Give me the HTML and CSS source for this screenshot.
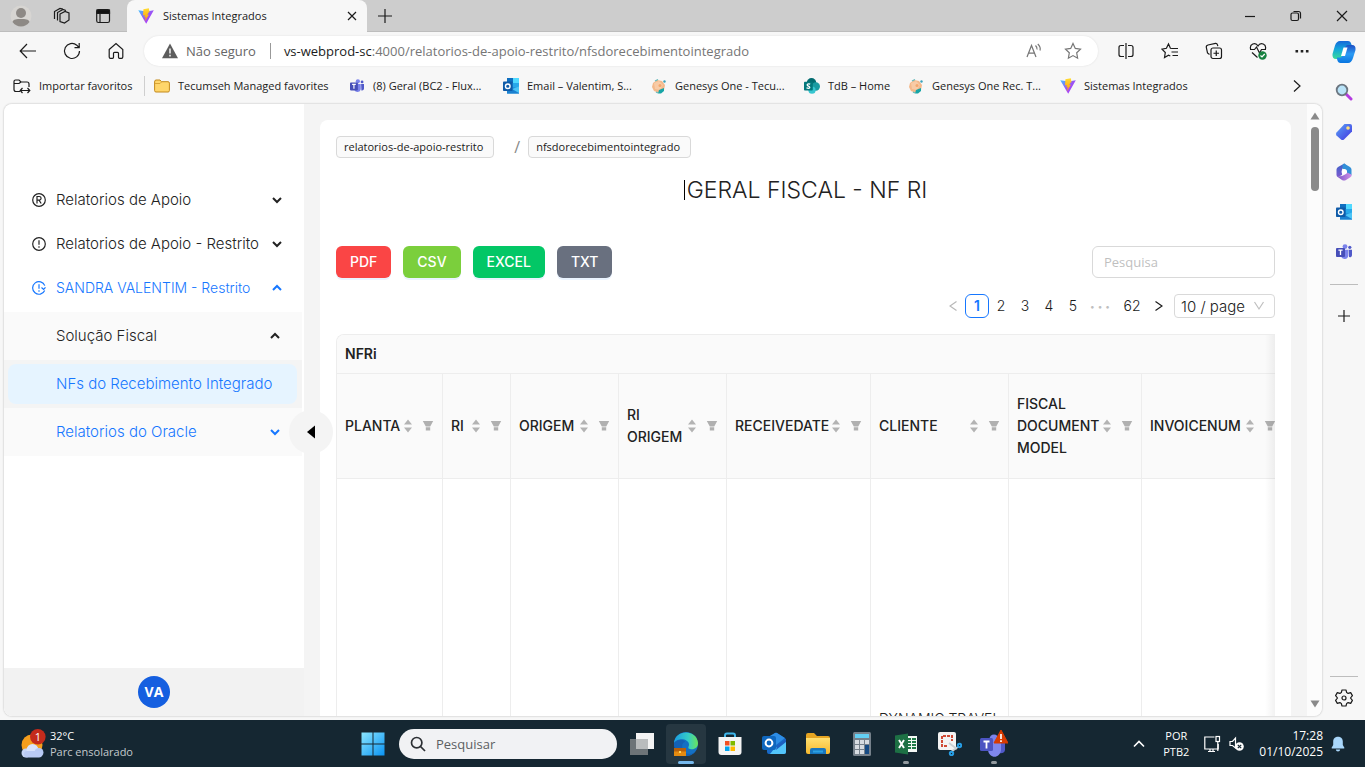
FILE: index.html
```html
<!DOCTYPE html>
<html lang="pt-BR">
<head>
<meta charset="utf-8">
<title>Sistemas Integrados</title>
<link rel="stylesheet" href="styles.css">
</head>
<body>
<svg class="defs" aria-hidden="true">
  <defs>
    <linearGradient id="gv" x1="0" y1="0" x2="1" y2="1"><stop offset="0" stop-color="#41c3ff"/><stop offset=".5" stop-color="#9a52f5"/><stop offset="1" stop-color="#bd34fe"/></linearGradient>
    <linearGradient id="gy" x1="0" y1="0" x2="0" y2="1"><stop offset="0" stop-color="#ffdd35"/><stop offset="1" stop-color="#ff9a00"/></linearGradient>
    <linearGradient id="gtag" x1="0" y1="0" x2="1" y2="1"><stop offset="0" stop-color="#5aa5f7"/><stop offset="1" stop-color="#4433df"/></linearGradient>
    <linearGradient id="gwin" x1="0" y1="0" x2="1" y2="1"><stop offset="0" stop-color="#8be6ff"/><stop offset="1" stop-color="#0a93f2"/></linearGradient>
    <linearGradient id="gedge" x1="0" y1="0" x2="1" y2="0"><stop offset="0" stop-color="#1b9de2"/><stop offset=".6" stop-color="#35cdc5"/><stop offset="1" stop-color="#6be35a"/></linearGradient>
    <linearGradient id="gcop1" x1="0" y1="0" x2="0" y2="1"><stop offset="0" stop-color="#1668d8"/><stop offset=".45" stop-color="#12a6dc"/><stop offset="1" stop-color="#3ddc97"/></linearGradient>
    <linearGradient id="gcop2" x1="0" y1="0" x2="0" y2="1"><stop offset="0" stop-color="#1d4fc4"/><stop offset=".5" stop-color="#2b9bf4"/><stop offset="1" stop-color="#0875e0"/></linearGradient>
    <linearGradient id="gm1" x1="0" y1="0" x2="0" y2="1"><stop offset="0" stop-color="#3a63c8"/><stop offset="1" stop-color="#7d5bd0"/></linearGradient>
    <linearGradient id="gm2" x1="0" y1="0" x2="1" y2="0"><stop offset="0" stop-color="#7b57c9"/><stop offset="1" stop-color="#cf8fe6"/></linearGradient>
    <linearGradient id="gfold" x1="0" y1="0" x2="0" y2="1"><stop offset="0" stop-color="#ffdf70"/><stop offset="1" stop-color="#f7b92e"/></linearGradient>
  </defs>
  <symbol id="vite" viewBox="0 0 16 16"><path d="M.3 2.2 8.2 15.8 15.8 2.2 8.5 3.5Z" fill="url(#gv)"/><path d="M10.8.2 5.4 1.3 5 7.4l1.8-.4-.5 2.5 1.5-.4-1 4.3L11 6.6l-1.8.4 1.6-2.7.8-.1Z" fill="url(#gy)"/></symbol>
  <symbol id="teams" viewBox="0 0 16 16"><circle cx="9" cy="2.6" r="2.4" fill="#7b83eb"/><circle cx="13.8" cy="3.3" r="1.6" fill="#5059c9"/><path d="M5 5.7h7.3v6A3.8 3.8 0 0 1 5 12.500Z" fill="#7b83eb"/><path d="M12.700 5.700H16v5.200c0 1.700-1.500 2.600-3 2.200Z" fill="#5059c9"/><rect y="4" width="9" height="9" rx=".9" fill="#464eb8"/><path d="M2.400 6.200h4.200M4.500 6.200v4.900" stroke="#fff" stroke-width="1.300"/></symbol>
  <symbol id="outlook" viewBox="0 0 16 16"><path d="M4 0h12v15.500H4Z" fill="#1490df"/><path d="M4 0h6v5H4Z" fill="#0f6fc0"/><path d="M10 0h6v5h-6Z" fill="#50d9ff"/><path d="M10 5h6v5h-6Z" fill="#28a8ea"/><path d="m4 9 12 1v5.500H4Z" fill="#1a80d0"/><path d="M16 8.500V15L9 11Z" fill="#4ac4f6"/><rect y="3.500" width="9.500" height="9.500" rx=".8" fill="#0f5ba8"/><circle cx="4.750" cy="8.250" r="2.300" fill="none" stroke="#fff" stroke-width="1.400"/></symbol>
  <symbol id="genesys" viewBox="0 0 16 16"><path d="m2 5 4-3 5 1 3 4-1 5-5 3-5-2-2-4Z" fill="#f4b98b"/><path d="m3 5 5-2 4 4-3 5-5-1Z" fill="#f8cba6"/><path d="M8 12l5-2v3l-3 2.500H7Z" fill="#17a5a6"/><path d="m4 3 3-1.500M5 14l2 1" stroke="#63b9ba" stroke-width="1.200" fill="none"/><circle cx="13.500" cy="3.500" r="1.200" fill="#3aa2bc"/><circle cx="9" cy="7.500" r="1.500" fill="#f3a86f"/></symbol>
  <symbol id="sharepoint" viewBox="0 0 16 16"><circle cx="7.500" cy="4.800" r="4.800" fill="#036c70"/><circle cx="11.800" cy="8.500" r="4.200" fill="#1a9ba1"/><circle cx="8" cy="12.200" r="3.600" fill="#37c6d0"/><rect y="3.800" width="8.800" height="8.800" rx=".8" fill="#03787c"/><path d="M6.200 6.200C3.500 5 2 7.200 4.400 8.200s1.500 2.900-1.900 1.700" fill="none" stroke="#fff" stroke-width="1.300"/></symbol>
  <symbol id="updown" viewBox="0 0 10 14"><path d="M5 .5 9 5.500H1ZM5 13.500 9 8.500H1Z" fill="#b3b3b3"/></symbol>
  <symbol id="filter" viewBox="0 0 12 12"><path d="M.8 1h10.400L8.200 6.400H3.800ZM3.800 7.200h4.400V10.500H3.800Z" fill="#b0b0b0"/></symbol>
  <symbol id="down" viewBox="0 0 12 12"><path d="m2 4 4 4 4-4" fill="none" stroke="currentColor" stroke-width="2"/></symbol>
  <symbol id="up" viewBox="0 0 12 12"><path d="m2 8 4-4 4 4" fill="none" stroke="currentColor" stroke-width="2"/></symbol>
</svg>

<header class="titlebar">
  <div class="title-tools">
    <button class="tt" aria-label="Perfil"><svg width="22" height="22" viewBox="0 0 22 22"><circle cx="11" cy="11" r="10.500" fill="#d7d5d2"/><circle cx="11" cy="8" r="5" fill="#8d8985"/><path d="M2.500 17c1-3 4-3 8.500-3s7.500 0 8.500 3A11 11 0 0 1 11 21.500 11 11 0 0 1 2.500 17Z" fill="#8d8985"/></svg></button>
    <button class="tt" aria-label="Espaços de trabalho"><svg class="ln" width="18" height="18" viewBox="0 0 18 18"><path d="m7 7 5-2.500 4 1.500v7l-4.500 3L7 14.500ZM7 7v7.500M4.500 13.500V5.500L10 2.500l3 1M1.500 12V4.500L7 1.500l3 .5"/></svg></button>
    <button class="tt" aria-label="Ações de guia"><svg class="ln" width="16" height="16" viewBox="0 0 16 16"><rect x="1.700" y="1.700" width="12.800" height="12.800" rx="1.800"/><path d="M2 2h12.500v3.300H2Z" fill="#111"/><path d="M5 5v9.500"/></svg></button>
  </div>
  <div class="tab"><svg width="16" height="16"><use href="#vite"/></svg><span>Sistemas Integrados</span><button aria-label="Fechar guia"><svg class="ln" width="10" height="10" viewBox="0 0 10 10"><path d="m1 1 8 8M9 1 1 9"/></svg></button></div>
  <button class="newtab" aria-label="Nova guia"><svg class="ln" width="14" height="14" viewBox="0 0 14 14"><path d="M7 0v14M0 7h14"/></svg></button>
  <div class="wins">
    <button aria-label="Minimizar"><svg class="ln" width="12" height="12" viewBox="0 0 12 12"><path d="M1 6.500h10"/></svg></button>
    <button aria-label="Restaurar"><svg class="ln" width="12" height="12" viewBox="0 0 12 12"><rect x="1" y="3" width="7.500" height="7.500" rx="1.500"/><path d="M3.500 1.500h5a2 2 0 0 1 2 2v5"/></svg></button>
    <button aria-label="Fechar"><svg class="ln" width="12" height="12" viewBox="0 0 12 12"><path d="m1 1 10 10M11 1 1 11"/></svg></button>
  </div>
</header>

<div class="browser">
  <div class="browser-main">
    <nav class="toolbar">
      <button class="tb" aria-label="Voltar"><svg class="ln" width="18" height="16" viewBox="0 0 18 16"><path d="M17 8H1.500M8 1 1.200 8 8 15"/></svg></button>
      <button class="tb" aria-label="Atualizar"><svg class="ln" width="18" height="18" viewBox="0 0 18 18"><path d="M16.500 9A7.500 7.500 0 1 1 13.800 3.200L16 5.500M16.200 1v4.700h-4.700"/></svg></button>
      <button class="tb" aria-label="Início"><svg class="ln" width="16" height="18" viewBox="0 0 16 18"><path d="M1.200 7.500 8 1.500l6.800 6V15q0 1.300-1.300 1.300h-2q-1 0-1-1v-4q0-1-1-1h-3q-1 0-1 1v4q0 1-1 1h-2Q1.200 16.300 1.200 15Z"/></svg></button>
      <div class="address">
        <svg width="16" height="16" viewBox="0 0 16 16"><path d="M8 .5 16 15.300H0Z" fill="#5d5d5d"/><path d="M8 5.500v5M8 11.800v1.600" stroke="#fff" stroke-width="1.400"/></svg>
        <span class="unsafe">Não seguro</span><span class="vbar"></span>
        <span class="url"><b>vs-webprod-sc</b>:4000/relatorios-de-apoio-restrito/nfsdorecebimentointegrado</span>
        <button aria-label="Ler em voz alta"><svg class="ln gray" width="16" height="16" viewBox="0 0 16 16"><path d="m1 14 4.500-11.500L10 14M2.500 10.200h6M9.500 2.500q2 2 1.500 4M11.800 1q3.200 3 2.200 6.500"/></svg></button>
        <button aria-label="Favoritar"><svg class="ln gray" width="18" height="18" viewBox="0 0 18 18"><path d="m9 1.500 2.300 4.900 5.200.7-3.800 3.700.9 5.400L9 13.600l-4.600 2.600.9-5.400L1.500 7.100l5.200-.7Z"/></svg></button>
      </div>
      <div class="actions">
        <button class="tb" aria-label="Tela dividida"><svg class="ln" width="16" height="16" viewBox="0 0 16 16"><path d="M6 2.500H3Q1 2.500 1 4.500v7q0 2 2 2h3M10 2.500h3q2 0 2 2v7q0 2-2 2h-3M8 0v16"/></svg></button>
        <button class="tb" aria-label="Favoritos"><svg class="ln" width="18" height="18" viewBox="0 0 18 18"><path d="M11 6.500 9.400 6.300 7.500 2 5.400 6.300l-4.400.8 3.300 3.400-.8 5 4-2.300 1.800.8M11 6.500h6M10.500 10H17M11.500 13.500H17"/></svg></button>
        <button class="tb" aria-label="Coleções"><svg class="ln" width="18" height="18" viewBox="0 0 18 18"><rect x="6" y="6" width="10.500" height="10.500" rx="2"/><path d="M11.250 8.500v5.500M8.500 11.250H14M4.500 12.500 2.500 11 1.300 5.500Q1 3.500 3 3l7.500-1.600q1.500-.2 2 1.500l.3 1.300"/></svg></button>
        <button class="tb" aria-label="Desempenho"><svg class="ln" width="18" height="18" viewBox="0 0 18 18"><path d="M1.700 7.500C0 2 6.500-.5 9 4c2.500-4.500 9-2 7.300 3.500M1 7.500h4.500L7.500 5l3 6 2-3.500H17M3 10.500 8.500 15.500"/><circle cx="13.500" cy="13.500" r="4.200" fill="#178240" stroke="none"/><path d="m11.500 13.500 1.500 1.500 2.700-3" stroke="#fff"/></svg></button>
        <button class="tb" aria-label="Mais"><svg width="14" height="4" viewBox="0 0 14 4"><path d="M.5 1h2.600v2.400H.5ZM5.700 1h2.600v2.400H5.700ZM10.900 1h2.600v2.400h-2.600Z" fill="#222"/></svg></button>
      </div>
    </nav>
    <nav class="favorites">
      <a href="#"><svg class="ln" width="18" height="16" viewBox="0 0 18 16"><path d="M7 13.500H3q-2 0-2-2V3.500Q1 2 2.500 2H6l2 2h6q2 0 2 2v3M1 5.500h5L8 4M7.500 12.500h9M9.500 10l-2.300 2.500L9.500 15M14.500 10l2.300 2.500-2.300 2.500"/></svg><span>Importar favoritos</span></a>
      <a href="#" class="sep"><svg width="16" height="16" viewBox="0 0 16 16"><path d="M.6 4Q.6 2 2 2h4l1.500 1.700H14q1.400 0 1.400 1.400v7.500q0 1.400-1.400 1.400H2q-1.400 0-1.400-1.400Z" fill="#ffd66b" stroke="#c38a1c"/><path d="M1 5.500h5l1.500-1.500" fill="none" stroke="#d9a435"/></svg><span>Tecumseh Managed favorites</span></a>
      <a href="#"><svg width="16" height="14"><use href="#teams"/></svg><span>(8) Geral (BC2 - Flux...</span></a>
      <a href="#"><svg width="16" height="16"><use href="#outlook"/></svg><span>Email – Valentim, S...</span></a>
      <a href="#"><svg width="16" height="16"><use href="#genesys"/></svg><span>Genesys One - Tecu...</span></a>
      <a href="#"><svg width="16" height="16"><use href="#sharepoint"/></svg><span>TdB – Home</span></a>
      <a href="#"><svg width="16" height="16"><use href="#genesys"/></svg><span>Genesys One Rec. T...</span></a>
      <a href="#"><svg width="16" height="16"><use href="#vite"/></svg><span>Sistemas Integrados</span></a>
      <button aria-label="Mais favoritos"><svg class="ln" width="8" height="12" viewBox="0 0 8 12"><path d="m1 .5 6 5.500-6 5.500"/></svg></button>
    </nav>

    <div class="page">
      <aside class="menu">
        <ul class="menu-list">
          <li class="item"><svg class="ln" width="14" height="14" viewBox="0 0 14 14"><circle cx="7" cy="7" r="6.300"/><path d="M5 10.500v-7h2.200q1.900 0 1.900 1.800T7.200 7.200H5m2 0 2.200 3.300"/></svg><a href="#">Relatorios de Apoio</a><svg class="arrow" width="12" height="12"><use href="#down"/></svg></li>
          <li class="item"><svg class="ln" width="14" height="14" viewBox="0 0 14 14"><circle cx="7" cy="7" r="6.300"/><path d="M7 3.200v4.500M7 9.300v1.500"/></svg><a href="#">Relatorios de Apoio - Restrito</a><svg class="arrow" width="12" height="12"><use href="#down"/></svg></li>
          <li class="item caps blue"><svg class="ln" width="14" height="14" viewBox="0 0 14 14"><path d="M12.700 9.500A6.300 6.300 0 1 1 12.800 4.600M7 3.200v4.500M7 9.300v1.500M9.500 6.500l2.100 2 1.900-2.200"/></svg><a href="#">SANDRA VALENTIM - Restrito</a><svg class="arrow" width="12" height="12"><use href="#up"/></svg></li>
        </ul>
        <ul class="submenu">
          <li class="sub"><a href="#">Solução Fiscal</a><svg width="12" height="12"><use href="#up"/></svg></li>
          <li class="nested"><a href="#">NFs do Recebimento Integrado</a></li>
          <li class="sub blue"><a href="#">Relatorios do Oracle</a><svg width="12" height="12"><use href="#down"/></svg></li>
        </ul>
        <div class="user"><span class="avatar">VA</span></div>
        <button class="collapse" aria-label="Recolher menu"><svg width="8" height="14" viewBox="0 0 8 14"><path d="M8 .5v13L0 7Z" fill="#000"/></svg></button>
      </aside>

      <main class="content">
        <section class="card">
          <div class="crumbs"><a class="tag" href="#">relatorios-de-apoio-restrito</a><span class="slash">/</span><a class="tag" href="#">nfsdorecebimentointegrado</a></div>
          <h1><span>GERAL FISCAL - NF RI</span></h1>
          <div class="exports">
            <button class="red">PDF</button><button class="lime">CSV</button><button class="green">EXCEL</button><button class="slate">TXT</button>
            <input type="search" aria-label="Pesquisa" placeholder="Pesquisa">
          </div>
          <nav class="pager">
            <button aria-label="Página anterior" disabled><svg class="ln" width="8" height="12" viewBox="0 0 8 12"><path d="M7.500 1.500 1 6l6.500 4.500"/></svg></button>
            <button class="current">1</button><button>2</button><button>3</button><button>4</button><button>5</button>
            <span class="dots">•••</span><button class="wide">62</button>
            <button aria-label="Próxima página"><svg class="ln" width="8" height="12" viewBox="0 0 8 12"><path d="M.5 1.500 7 6 .5 10.500"/></svg></button>
            <span class="size"><select aria-label="Itens por página"><option>10 / page</option></select><svg class="ln" width="12" height="10" viewBox="0 0 12 10"><path d="m1.500 1 4.500 7 4.500-7"/></svg></span>
          </nav>
          <div class="grid">
            <div class="grid-title">NFRi</div>
            <table>
              <colgroup><col class="w106"><col class="w68"><col class="w108"><col class="w108"><col class="w144"><col class="w138"><col class="w133"><col class="w143"></colgroup>
              <thead><tr>
                <th><div class="th"><span>PLANTA</span><svg width="10" height="14"><use href="#updown"/></svg><svg width="12" height="12"><use href="#filter"/></svg></div></th>
                <th><div class="th"><span>RI</span><svg width="10" height="14"><use href="#updown"/></svg><svg width="12" height="12"><use href="#filter"/></svg></div></th>
                <th><div class="th"><span>ORIGEM</span><svg width="10" height="14"><use href="#updown"/></svg><svg width="12" height="12"><use href="#filter"/></svg></div></th>
                <th><div class="th"><span>RI<br>ORIGEM</span><svg width="10" height="14"><use href="#updown"/></svg><svg width="12" height="12"><use href="#filter"/></svg></div></th>
                <th><div class="th"><span>RECEIVEDATE</span><svg width="10" height="14"><use href="#updown"/></svg><svg width="12" height="12"><use href="#filter"/></svg></div></th>
                <th><div class="th"><span>CLIENTE</span><svg width="10" height="14"><use href="#updown"/></svg><svg width="12" height="12"><use href="#filter"/></svg></div></th>
                <th><div class="th"><span>FISCAL<br>DOCUMENT<br>MODEL</span><svg width="10" height="14"><use href="#updown"/></svg><svg width="12" height="12"><use href="#filter"/></svg></div></th>
                <th><div class="th"><span>INVOICENUM</span><svg width="10" height="14"><use href="#updown"/></svg><svg width="12" height="12"><use href="#filter"/></svg></div></th>
              </tr></thead>
              <tbody><tr><td></td><td></td><td></td><td></td><td></td><td>DYNAMIC TRAVEL</td><td></td><td></td></tr></tbody>
            </table>
          </div>
        </section>
      </main>
      <div class="scroll"><svg width="10" height="8" viewBox="0 0 10 8"><path d="M5 .5 9.500 7.500H.5Z" fill="#8a8a8a"/></svg><span class="thumb"></span><svg width="10" height="8" viewBox="0 0 10 8"><path d="M5 7.500 9.500.5H.5Z" fill="#8a8a8a"/></svg></div>
    </div>
  </div>

  <aside class="edgebar">
    <button aria-label="Copilot"><svg width="24" height="24" viewBox="0 0 24 24"><path d="M8 1h8q2.500 0 3.300 3l1 3h-4.500q-2 0-2.700 2.500l-2 7Q10.500 19 8 19H4Q0 19 .5 14L3 5.500Q4.500 1 8 1Z" fill="url(#gcop1)"/><path d="M16 23H8.500q-2.500 0-3.200-3l-.6-2.500H8q2 0 2.700-2.500l2.300-7Q13.700 5 16 5h4q4 0 3.500 5L21 18q-1.500 5-5 5Z" fill="url(#gcop2)"/><path d="M11.500 7.500h4L13 16H9Z" fill="#fff"/></svg></button>
    <button aria-label="Pesquisar"><svg width="18" height="18" viewBox="0 0 18 18"><path d="m11 11 5 5" stroke="#b43be0" stroke-width="3" stroke-linecap="round"/><circle cx="7" cy="7" r="5.300" fill="#b9e3f8" stroke="#6c7680" stroke-width="1.800"/></svg></button>
    <button aria-label="Compras"><svg width="18" height="18" viewBox="0 0 18 18"><path d="M9.500 1H15q2 0 2 2v5.500L9 16.500q-1.500 1.200-3 0l-4.500-4q-1.200-1.500 0-3Z" fill="url(#gtag)"/><circle cx="13" cy="5" r="1.800" fill="#ffe07a"/></svg></button>
    <button aria-label="Microsoft 365"><svg width="18" height="18" viewBox="0 0 18 18"><path d="M9.500.5 3 4Q1.500 5 1.500 6.500V12q0 1.500 1.500 2l4-2V7q0-1.500 1.500-2.300L12 3Z" fill="url(#gm1)"/><path d="m9 .5 6 3.500q1.500 1 1.500 2.500v6L12 10V8L7.500 5.500V2Z" fill="#3290d8"/><path d="m2 13.500 5 3.500q2 1 4 0l4-2.500q2-1 1.500-3L12 9.500 9 12l-2 1Z" fill="url(#gm2)"/><circle cx="9.300" cy="8.800" r="2.700" fill="#fff"/></svg></button>
    <button aria-label="Outlook"><svg width="16" height="16"><use href="#outlook"/></svg></button>
    <button aria-label="Teams"><svg width="16" height="16"><use href="#teams"/></svg></button>
    <hr>
    <button class="add" aria-label="Adicionar"><svg class="ln" width="12" height="12" viewBox="0 0 12 12"><path d="M6 0v12M0 6h12"/></svg></button>
    <hr class="push">
    <button class="gear" aria-label="Configurações"><svg class="ln" width="18" height="18" viewBox="0 0 18 18"><circle cx="9" cy="9" r="2"/><path d="M7 1h4l.7 2.600 1.400.8 2.600-.8 1.700 3L15.500 9l1.900 2.400-1.700 3-2.600-.8-1.400.8L11 17H7l-.7-2.600-1.400-.8-2.600.8-1.700-3L2.500 9 .6 6.600l1.700-3 2.600.8 1.400-.8Z" stroke-linejoin="round"/></svg></button>
  </aside>
</div>

<footer class="taskbar">
  <div class="weather">
    <svg width="26" height="30" viewBox="0 0 26 30"><circle cx="12" cy="16" r="10.500" fill="#f59e1d"/><circle cx="6" cy="24" r="4.500" fill="#c6d6f8"/><circle cx="12.500" cy="21" r="6" fill="#d8e3fc"/><circle cx="19" cy="23.500" r="4.500" fill="#b6c9f4"/><rect x="4" y="22" width="18" height="6.500" rx="3" fill="#b9cbf5"/><circle cx="17.800" cy="7.800" r="7.800" fill="#c42b1c"/><text x="18" y="12" class="badge">1</text></svg>
    <p>32°C<br><span>Parc ensolarado</span></p>
  </div>
  <div class="apps">
    <button class="app" aria-label="Iniciar"><svg width="24" height="24" viewBox="0 0 24 24"><path d="M.5.500h11v11H.5ZM12.500.500h11v11h-11ZM.5 12.500h11v11H.5ZM12.500 12.500h11v11h-11Z" fill="url(#gwin)"/></svg></button>
    <label class="search"><svg width="16" height="16" viewBox="0 0 16 16"><circle cx="6.700" cy="6.700" r="5.200" fill="none" stroke="#2c3034" stroke-width="1.700"/><path d="m10.500 10.500 4.500 4.500" stroke="#2c3034" stroke-width="1.700"/></svg><input type="text" placeholder="Pesquisar" aria-label="Pesquisar"></label>
    <button class="app" aria-label="Visão de tarefas"><svg width="24" height="24" viewBox="0 0 24 24"><path d="M6 1h18v16H6Z" fill="#f3f3f3"/><path d="M0 7h18v16H0Z" fill="#777d80" opacity=".9"/><path d="M6 7h12v10H6Z" fill="#b9bcbd"/></svg></button>
    <button class="app active" aria-label="Edge"><svg width="26" height="26" viewBox="0 0 26 26"><circle cx="13" cy="13" r="12" fill="#1470c4"/><path d="M1 12C2-2 24-2 25 12c0 5-4 7-8 6-3-.7-1-2-1-4.500C16 8 5 6 1 12Z" fill="url(#gedge)"/><path d="M1 12c5-5 11-3 11-1-4 1-4 8 1 11 3 1.800 7 1 10-2-7 9-22 6-22-8Z" fill="#1361b5"/><path d="M1 17h12v8H1Z" fill="#e58b10"/><path d="M1 17h12v3.500H1Z" fill="#b7600a"/><path d="M6 20h2v2H6Z" fill="#ffd65e"/></svg></button>
    <button class="app" aria-label="Store"><svg width="24" height="24" viewBox="0 0 24 24"><path d="M7 7V3.500Q7 1.500 9 1.500h6q2 0 2 2V7" fill="none" stroke="#3fb6ea" stroke-width="2"/><path d="M.5 5h23v15q0 3-3 3h-17q-3 0-3-3Z" fill="#f4f4f4"/><path d="M7 9h4.500v4.500H7Z" fill="#f25022"/><path d="M12.500 9H17v4.500h-4.500Z" fill="#7fba00"/><path d="M7 14.500h4.500V19H7Z" fill="#00a4ef"/><path d="M12.500 14.500H17V19h-4.500Z" fill="#ffb900"/></svg></button>
    <button class="app" aria-label="Outlook"><svg width="24" height="24" viewBox="0 0 24 24"><path d="m5 7 8-6q1-.7 2 0l9 6v13q0 2-2 2H7q-2 0-2-2Z" fill="#1769c8"/><path d="m6 5 7-4q1-.5 2 0l8 5-9 7Z" fill="#2d8de5"/><path d="M24 9v11q0 2-2 2H8l4-5Z" fill="#53c5fa"/><path d="m24 7-9 7-1 4 10-8Z" fill="#1d5fc0"/><rect y="4" width="14" height="14" rx="2" fill="#0f67be"/><circle cx="7" cy="11" r="3.400" fill="none" stroke="#fff" stroke-width="2"/></svg></button>
    <button class="app" aria-label="Arquivos"><svg width="26" height="24" viewBox="0 0 26 24"><path d="M1 3q0-2 2-2h6l3 3h11q2 0 2 2v3H1Z" fill="#e5a422"/><path d="M1 6h24v14q0 2-2 2H3q-2 0-2-2Z" fill="url(#gfold)"/><path d="M5 22v-4q0-2 2-2h12q2 0 2 2v4Z" fill="#1976bd"/><path d="M8 19.500h10" stroke="#2ba2e4" stroke-width="2"/></svg></button>
    <button class="app" aria-label="Calculadora"><svg width="18" height="24" viewBox="0 0 18 24"><rect width="18" height="24" rx="1.500" fill="#76818b"/><path d="M2 2h14v4H2Z" fill="#63d0f4"/><path d="M2 8h4v4H2ZM7 8h4v4H7ZM12 8h4v4h-4ZM2 13h4v4H2ZM7 13h4v4H7ZM2 18h4v4H2ZM7 18h4v4H7Z" fill="#d7dce1"/><path d="M12 13h4v9h-4Z" fill="#164b84"/></svg></button>
    <button class="app run" aria-label="Excel"><svg width="22" height="22" viewBox="0 0 22 22"><path d="M12 3h10v16H12Z" fill="#f4f8f5"/><path d="M13 5h3v2h-3ZM17 5h4v2h-4ZM13 8h3v2h-3ZM17 8h4v2h-4ZM13 11h3v2h-3ZM17 11h4v2h-4ZM13 14h3v2h-3ZM17 14h4v2h-4Z" fill="#1f7a47"/><path d="m0 2.500 13-2v21l-13-2Z" fill="#1d7044"/><path d="m4 7 5 8M9 7l-5 8" stroke="#fff" stroke-width="1.900"/></svg></button>
    <button class="app" aria-label="Ferramenta de captura"><svg width="24" height="24" viewBox="0 0 24 24"><rect width="18" height="18" rx="2" fill="#f3f3f3"/><path d="M9 14H4V4h10v5" fill="none" stroke="#d04a35" stroke-width="2" stroke-dasharray="3 1"/><path d="m11 11 8 6M21 14l-8 6" stroke="#c9ced2" stroke-width="1.800"/><g fill="none" stroke="#269ee5" stroke-width="2"><circle cx="21.500" cy="13.500" r="1.700"/><circle cx="13.500" cy="21.500" r="1.700"/></g></svg></button>
    <button class="app run" aria-label="Teams"><svg width="28" height="28" viewBox="0 0 28 28"><circle cx="14" cy="9" r="4.500" fill="#7b83eb"/><path d="M19 11h6v9q-1 4-6 3Z" fill="#5059c9"/><path d="M8 12h13v8c-1 9-12 9-13 0Z" fill="#7f87ee"/><rect y="8" width="13" height="13" rx="1.500" fill="#4c54c2"/><path d="M3.500 11.500h6M6.500 11.500v7" stroke="#fff" stroke-width="1.800"/><path d="M21 0 28 13H14Z" fill="#d83b01" stroke="#d83b01" stroke-linejoin="round"/><path d="M21 4v5M21 10.300v1.700" stroke="#fff" stroke-width="1.700"/></svg></button>
  </div>
  <div class="tray">
    <button aria-label="Ícones ocultos"><svg class="ln" width="12" height="8" viewBox="0 0 12 8"><path d="m1 6.500 5-5 5 5" stroke-width="1.600"/></svg></button>
    <p class="lang">POR<br>PTB2</p>
    <svg class="ln" width="18" height="18" viewBox="0 0 18 18"><path d="M11.500 2H1.800v12h13.400V9M5 16.500h7M7 14v2.500M10 14v2.500"/><rect x="13" y="1.500" width="3.500" height="5"/><path d="M14.800 6.500V16"/></svg>
    <svg class="ln vol" width="16" height="16" viewBox="0 0 16 16"><path d="M6.500 2v10L3.500 9.500H1v-4h2.500Z"/><circle cx="10.500" cy="10.500" r="4.300" fill="#fff" stroke="none"/><path d="m8.800 8.800 3.400 3.400M12.200 8.800l-3.400 3.400" stroke="#152732"/></svg>
    <p class="clock">17:28<br>01/10/2025</p>
    <svg width="14" height="16" viewBox="0 0 14 16"><path d="M7 .8c-3.300 0-4.800 2.200-4.800 4.700v3.500L.6 11.700q-.3.800.6.800h11.600q.9 0 .6-.8L11.800 9V5.500C11.800 3 10.300.8 7 .8ZM4.800 13.500h4.400Q9 15.400 7 15.400t-2.200-1.900Z" fill="#a9d7fb"/></svg>
  </div>
</footer>
</body>
</html>
```
FILE: styles.css
```css
* { box-sizing: border-box; }
body { margin: 0; height: 100vh; display: flex; flex-direction: column; background: #f7f7f7; font: 12px/16px "Open Sans", "Noto Sans", sans-serif; color: #1b1b1b; overflow: hidden; }
button { border: 0; padding: 0; background: none; font: inherit; color: inherit; display: flex; align-items: center; justify-content: center; }
a { color: inherit; text-decoration: none; }
p, ul, h1 { margin: 0; padding: 0; }
svg { display: block; flex: none; }
.defs { position: absolute; width: 0; height: 0; }
.ln { fill: none; stroke: currentColor; stroke-width: 1.2; }

/* Title bar */
.titlebar { flex: none; height: 32px; display: flex; background: #cdcdcd; border-bottom: 1px solid #bdbdbd; }
.title-tools { display: flex; width: 127px; }
.tt { width: 41px; }
.tab { width: 240px; height: 32px; display: flex; align-items: center; gap: 9px; padding: 0 10px 0 11px; background: #f7f7f7; border-radius: 8px 8px 0 0; }
.tab span { flex: 1; font-size: 11px; }
.newtab { width: 35px; }
.wins { margin-left: auto; display: flex; }
.wins button { width: 46px; }

/* Browser chrome */
.browser { flex: 1; min-height: 0; display: flex; }
.browser-main { flex: 1; min-width: 0; display: flex; flex-direction: column; }
.toolbar { flex: none; height: 38px; display: flex; align-items: center; padding-left: 6px; }
.tb { width: 44px; height: 30px; }
.address { flex: 1; height: 30px; margin: 0 6px; padding: 0 16px 0 18px; display: flex; align-items: center; background: #fff; border-radius: 15px; font-size: 13px; color: #767676; box-shadow: 0 0 2px #ddd; }
.unsafe { margin-left: 8px; color: #666; }
.vbar { width: 1px; height: 16px; margin: 0 13px 0 14px; background: #999; }
.url { flex: 1; }
.url b { font-weight: 400; color: #1b1b1b; }
.address button { margin-left: 22px; }
.gray { color: #767676; }
.actions { display: flex; }
.favorites { flex: none; height: 33px; padding: 0 0 2px 13px; display: grid; grid-template-columns: 141px 195px 154px 148px 153px 104px 152px 1fr 54px; align-items: center; font-size: 11px; }
.favorites a { display: flex; align-items: center; gap: 8px; height: 20px; white-space: nowrap; }
.favorites .sep { margin-left: -10px; padding-left: 9px; border-left: 1px solid #cfcfcf; }

/* Side bar of the browser */
.edgebar { flex: none; width: 41px; display: flex; flex-direction: column; align-items: center; padding: 0 2px 4px 0; }
.edgebar button { width: 39px; height: 40px; }
.edgebar hr { width: 28px; height: 1px; margin: 12px 0 11px; border: 0; background: #bdbdbd; }
.edgebar hr.push { margin: auto 0 3px; }
.edgebar .gear { height: 36px; }

/* Page frame */
.page { flex: 1; min-height: 0; margin: 1px 2px 4px 4px; display: flex; overflow: hidden; border-radius: 8px; background: #f4f4f4; box-shadow: 0 0 2px #aaa; font-family: Inter, sans-serif; font-size: 14px; line-height: 22px; }
.menu { position: relative; flex: none; width: 300px; display: flex; flex-direction: column; background: #fff; color: #222; font-size: 15px; font-weight: 300; }
.menu-list { padding: 76px 21px 0 28px; list-style: none; }
.item { height: 40px; margin-bottom: 4px; display: flex; align-items: center; gap: 10px; }
.item a, .sub a { flex: 1; white-space: nowrap; }
.caps { font-size: 14px; }
.blue { color: #1677ff; }
.submenu { list-style: none; background: #fafafa; width: 298px; }
.sub { height: 48px; display: flex; align-items: center; padding: 0 21px 0 52px; }
.nested { height: 48px; padding: 4px 5px 4px 4px; background: #f4f4f4; }
.nested a { display: flex; align-items: center; height: 40px; padding-left: 48px; border-radius: 8px; background: #e6f4ff; color: #1677ff; }
.user { margin-top: auto; height: 48px; display: flex; align-items: center; justify-content: center; background: #f2f2f2; }
.avatar { width: 32px; height: 32px; border-radius: 50%; background: #155fe0; color: #fff; font-family: "Open Sans", sans-serif; font-size: 14px; font-weight: 700; line-height: 32px; text-align: center; }
.collapse { position: absolute; top: 306px; right: -29px; width: 44px; height: 44px; border-radius: 50%; background: #f4f4f4; z-index: 1; }
.content { flex: 1; min-width: 0; padding: 16px 16px 0; overflow: hidden; }
.card { padding: 16px; background: #fff; border-radius: 8px; min-height: 100%; }
.crumbs { display: flex; align-items: center; height: 22px; font: 12px/20px "Open Sans", sans-serif; }
.tag { border: 1px solid #d9d9d9; border-radius: 4px; padding: 0 10px 0 7px; background: #fafafa; font-size: 11px; }
.slash { margin: 0 8px 0 20px; font-size: 16px; color: #888; }
h1 { margin: 12px 0 36px; text-align: center; font-size: 23px; line-height: 40px; font-weight: 300; color: #222; }
h1 span { display: inline-block; border-left: 1px solid #000; padding-left: 2px; line-height: 20px; }
.exports { display: flex; gap: 12px; }
.exports button { height: 32px; padding: 0 14px; border-radius: 6px; color: #fff; font-weight: 500; box-shadow: 0 2px 0 #ebf4ff; }
.red { background: #fa4545; }
.lime { background: #7bcf3c; }
.green { background: #03c766; }
.slate { background: #69707f; }
.exports input { margin-left: auto; width: 183px; height: 32px; padding: 0 11px; border: 1px solid #d9d9d9; border-radius: 6px; font: 13px "Open Sans", sans-serif; }
.exports input::placeholder { color: #bfbfbf; }
.pager { margin: 16px 0; height: 24px; display: flex; justify-content: flex-end; align-items: center; font-weight: 300; }
.pager button { width: 24px; height: 24px; }
.pager button:disabled { color: #b8b8b8; }
.pager .current { border: 1px solid #1677ff; border-radius: 6px; color: #1677ff; font-weight: 600; }
.pager .wide { width: 30px; }
.dots { width: 32px; text-align: center; font-size: 10px; letter-spacing: 2px; color: #bfbfbf; }
.size { position: relative; margin-left: 3px; }
.size select { display: block; width: 101px; height: 24px; padding: 0 6px; appearance: none; border: 1px solid #d9d9d9; border-radius: 4px; background: #fff; font: 300 15px Inter, sans-serif; color: #222; }
.size svg { position: absolute; right: 10px; top: 7px; color: #bfbfbf; pointer-events: none; }

/* Table */
.grid { position: relative; overflow: hidden; border: 1px solid #ededed; border-right: 0; border-radius: 8px 0 0 0; color: #222; }
.grid::after { content: ""; position: absolute; top: 0; right: 0; bottom: 0; width: 10px; background: linear-gradient(to left, #0000000d, #0000); }
.grid-title { height: 38px; padding: 8px; background: #fafafa; font-weight: 600; }
table { table-layout: fixed; width: 948px; border-collapse: separate; border-spacing: 0; }
.w106 { width: 106px; } .w68 { width: 68px; } .w108 { width: 108px; } .w144 { width: 144px; } .w138 { width: 138px; } .w133 { width: 133px; } .w143 { width: 143px; }
th { height: 106px; padding: 0 8px; background: #fafafa; border: solid #ededed; border-width: 1px 1px 1px 0; text-align: left; font-weight: 500; white-space: nowrap; font-size: 14px; }
.th { display: flex; align-items: center; gap: 9px; }
.th span { flex: 1; min-width: 0; }
td { height: 480px; padding: 0 8px; border-right: 1px solid #ededed; font-weight: 300; white-space: nowrap; }

.scroll { flex: none; width: 15px; padding: 8px 0; display: flex; flex-direction: column; align-items: center; background: #fcfcfc; }
.thumb { width: 8px; height: 64px; margin: 7px 0 auto; border-radius: 4px; background: #8a8a8a; }

/* Task bar */
.taskbar { flex: none; height: 47px; display: grid; grid-template-columns: 1fr auto 1fr; align-items: center; background: #152732; color: #fff; font-size: 11px; }
.weather { display: flex; align-items: center; gap: 4px; padding-left: 20px; }
.weather span { color: #c3c9cc; }
.badge { font: 11px "Open Sans", sans-serif; fill: #fff; text-anchor: middle; }
.apps { display: flex; align-items: center; padding-left: 2px; }
.app { position: relative; width: 44px; height: 40px; }
.app.active { width: 40px; margin: 0 2px; border-radius: 4px; background: #263741; }
.app.active::after, .run::after { content: ""; position: absolute; bottom: 0; width: 6px; height: 3px; border-radius: 2px; background: #929a9f; }
.app.active::after { width: 16px; background: #76b9ed; }
.search { display: flex; align-items: center; gap: 10px; width: 218px; height: 30px; margin: 0 3px 0 4px; padding: 0 11px; border-radius: 15px; background: #f1f2f4; }
.search input { flex: 1; min-width: 0; padding: 0; border: 0; background: none; font: 13px "Open Sans", sans-serif; }
.search input::placeholder { color: #5c5f62; }
.tray { display: flex; align-items: center; justify-content: flex-end; padding-right: 20px; }
.lang { margin: 0 14px 0 18px; text-align: center; }
.vol { margin: 0 14px 0 8px; }
.clock { margin-right: 8px; text-align: right; font-size: 12px; }
```
